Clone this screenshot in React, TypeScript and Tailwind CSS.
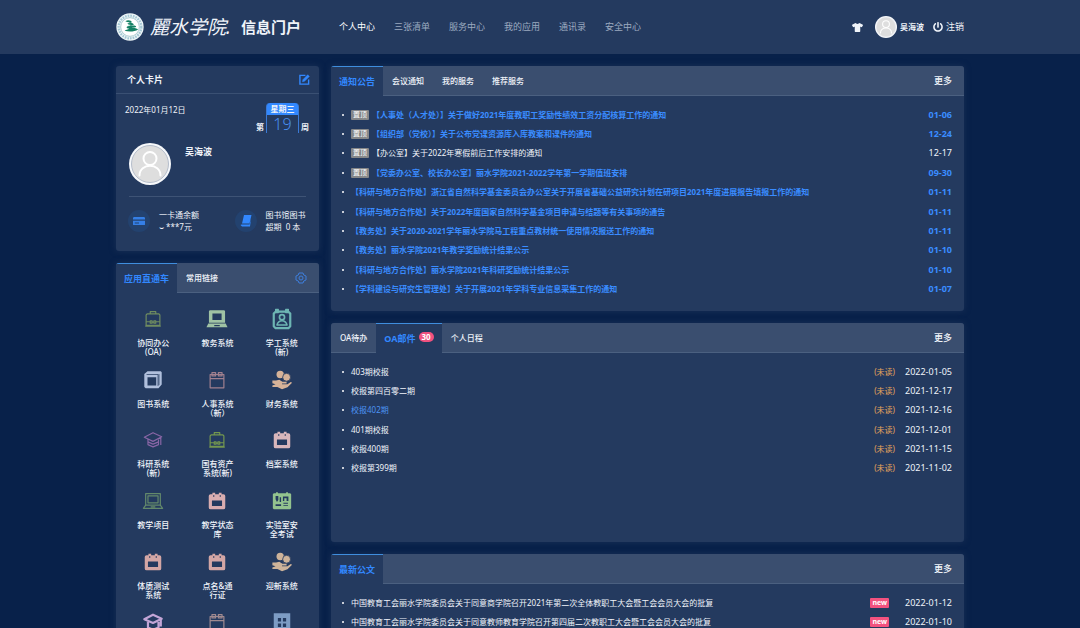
import React from "react";
import { FaTshirt, FaPowerOff } from "react-icons/fa";

type IconProps = { className?: string };

function Svg({ className, children }: { className?: string; children: React.ReactNode }) {
  return (
    <svg viewBox="0 0 24 24" aria-hidden="true" fill="none" stroke="currentColor" strokeWidth="1.3" strokeLinejoin="round" className={`size-[22px] ${className ?? ""}`}>
      {children}
    </svg>
  );
}

function Briefcase({ className }: IconProps) {
  return (
    <Svg className={className}>
      <path d="M9 6.500V4h6v2.500M5.500 6.500h13l1 1V19h-15V7.500zM4.500 15H9m6 0h4.500M9 14h2v2.500H9zM13 14h2v2.500h-2zM11 15.500h2M3.500 19.700h17" />
    </Svg>
  );
}

function LaptopSolid({ className }: IconProps) {
  return (
    <Svg className={className}>
      <g fill="currentColor" stroke="none" fillRule="evenodd">
        <path d="M4 2.500h16l.8 1V16H3.200V3.500zM7 6v7h10V6z" />
        <path d="M2.500 17h19l2 4H.5zM9 18.500v1.300h6v-1.300z" />
      </g>
    </Svg>
  );
}

function LaptopLine({ className }: IconProps) {
  return (
    <Svg className={className}>
      <path d="M4 4h16v12.500H4zM6.500 6.500h11V14h-11zM4 16.500L1.500 20h21L20 16.500M9.500 18.500h5" />
    </Svg>
  );
}

function Badge({ className }: IconProps) {
  return (
    <Svg className={className}>
      <path strokeWidth="2.400" d="M5 4h14l2 2v14l-2 2H5l-2-2V6z" />
      <path fill="currentColor" d="M5 1.500h3V5H5zM16 1.500h3V5h-3z" />
      <circle cx="12" cy="10" r="2.800" strokeWidth="1.800" />
      <path strokeWidth="1.700" d="M6.500 18.500c1-3.500 3-4.500 5.500-4.500s4.500 1 5.500 4.500z" />
    </Svg>
  );
}

function Books({ className }: IconProps) {
  return (
    <Svg className={className}>
      <g fill="currentColor" stroke="none" fillRule="evenodd">
        <path d="M6 2.500h14.500l1 1V17L18 21H4l-1.500-1.500v-14zM6 9v9h9.500V9z" />
      </g>
      <path stroke="#243a5f" strokeWidth="0.800" d="M5 6h12.500v12.500M18.500 5.500v12" />
    </Svg>
  );
}

function CalendarLine({ className }: IconProps) {
  return (
    <Svg className={className}>
      <path d="M4.500 6h15v14.500h-15zM4.500 10.500h15M6.500 4h4v3.500h-4zM13.500 4h4v3.500h-4z" />
    </Svg>
  );
}

function CalendarSolid({ className }: IconProps) {
  return (
    <Svg className={className}>
      <path
        fill="currentColor"
        stroke="none"
        fillRule="evenodd"
        d="M5 4.500h2V3h3v1.500h4V3h3v1.500h2a2 2 0 0 1 2 2V19a2 2 0 0 1-2 2H5a2 2 0 0 1-2-2V6.500a2 2 0 0 1 2-2zM6.500 11.500v6h11v-6zM8 5.500v2h1v-2zM15 5.500v2h1v-2z"
      />
    </Svg>
  );
}

function HandCoins({ className }: IconProps) {
  return (
    <Svg className={className}>
      <circle cx="10" cy="6" r="4" fill="currentColor" stroke="none" />
      <circle cx="17" cy="9" r="4.300" fill="currentColor" stroke="#243a5f" strokeWidth="0.900" />
      <path fill="currentColor" stroke="none" d="M1.500 12.500h4l3.500-.8 3.500 2.300H17v1.800h-5v.8h6l3.500-2.500 1.500.9-5 5-6 2-5-2.500h-5.500v-1.500L5 16.500l-3.500-1z" />
    </Svg>
  );
}

function GradLine({ className }: IconProps) {
  return (
    <Svg className={className}>
      <path d="M2.500 9L12 4l9.500 4.500L12 13.500zM6.500 11.500v5.500l5.500 2.500 6-2.500v-5.500M6.500 14l5.500 2.500 6-2.500M20.500 9v8.500" />
    </Svg>
  );
}

function GradSolid({ className }: IconProps) {
  return (
    <Svg className={className}>
      <path strokeWidth="2.400" d="M2.500 9L12 4l9.500 4.500L12 13zM6.500 12v6l5.500 2.500 6-2.500v-6M20.500 9v8" />
    </Svg>
  );
}

function LabCard({ className }: IconProps) {
  return (
    <Svg className={className}>
      <path
        fill="currentColor"
        stroke="none"
        fillRule="evenodd"
        d="M3 3.500h2.500V2.500h2v1h9v-1h2v1H21l1 1V20l-1 1H3l-1-1V4.500zM5 6.500V10l1.500 3L8 11V6.500zM9.500 8v5h1.500V8zM13 7v5h1.500V9H17v3h2V7zM5 15.500v2h6v-2zM13.500 14v1h5v-1zM13.500 16.500v1h5v-1z"
      />
    </Svg>
  );
}

function Building({ className }: IconProps) {
  return (
    <Svg className={className}>
      <path fill="currentColor" stroke="none" fillRule="evenodd" d="M3 2.500h18V22H3zM7.500 7.500v4h3.500v-4zM13 7.500v4h3.500v-4zM7.500 13.500v4h3.500v-4zM13 13.500v4h3.500v-4z" />
    </Svg>
  );
}

function SchoolSeal() {
  return (
    <svg viewBox="0 0 84 84" role="img" aria-label="校徽" className="size-[28px] shrink-0">
      <circle cx="42" cy="42" r="41" fill="#eef6f8" />
      <circle cx="42" cy="42" r="34" fill="none" stroke="#a5c8d5" strokeWidth="7" strokeDasharray="5 3" />
      <circle cx="42" cy="42" r="28" fill="#ffffff" stroke="#8ab5bd" strokeWidth="2" />
      <path fill="#148064" d="M28 25c8-6 19-2 19 2s-8 2-13 5c6-3 18-2 19 2s-10 2-17 6c8-2 22-4 24 0s-7 4-13 5c8-1 18 1 19 5-10 6-28 7-40 3 4-3 9-4 14-6-5 0-9-2-8-5s9-5 12-7c-5 0-9-1-8-3s6-4 8-5c-4 1-10 1-16-2z" />
    </svg>
  );
}

function Avatar({ small = false }: { small?: boolean }) {
  return (
    <svg viewBox="0 0 42 42" role="img" aria-label="头像" className={small ? "size-[22px] shrink-0" : "size-[42px] shrink-0"}>
      <circle cx="21" cy="21" r="21" fill="#f6f8fb" />
      <circle cx="21" cy="21" r="18.500" fill="#dedede" stroke={small ? "#e6e8ec" : "#a7b1c2"} strokeWidth="0.8" />
      <g fill="none" stroke="#ffffff" strokeWidth="2" strokeLinecap="round">
        <circle cx="21" cy="15.500" r="6.500" />
        <path d="M10.500 32.500c0-13 21-13 21 0" />
      </g>
    </svg>
  );
}

type AppEntry = { name: string[]; icon: (p: IconProps) => React.JSX.Element; color: string };

const apps: AppEntry[] = [
  { name: ["协同办公", "(OA)"], icon: Briefcase, color: "text-[#6f8c60]" },
  { name: ["教务系统"], icon: LaptopSolid, color: "text-[#9fc2a4]" },
  { name: ["学工系统", "(新)"], icon: Badge, color: "text-[#6db5b3]" },
  { name: ["图书系统"], icon: Books, color: "text-[#b0bfdc]" },
  { name: ["人事系统", "（新）"], icon: CalendarLine, color: "text-[#a0808f]" },
  { name: ["财务系统"], icon: HandCoins, color: "text-[#d6b298]" },
  { name: ["科研系统", "(新)"], icon: GradLine, color: "text-[#8865a5]" },
  { name: ["国有资产", "系统(新)"], icon: Briefcase, color: "text-[#73974f]" },
  { name: ["档案系统"], icon: CalendarSolid, color: "text-[#d8b6bb]" },
  { name: ["教学项目"], icon: LaptopLine, color: "text-[#63896b]" },
  { name: ["教学状态", "库"], icon: CalendarSolid, color: "text-[#d9adb0]" },
  { name: ["实验室安", "全考试"], icon: LabCard, color: "text-[#93c38e]" },
  { name: ["体质测试", "系统"], icon: CalendarSolid, color: "text-[#d3a6a5]" },
  { name: ["点名&通", "行证"], icon: CalendarSolid, color: "text-[#d3a6a5]" },
  { name: ["迎新系统"], icon: HandCoins, color: "text-[#cdb39a]" },
  { name: [], icon: GradSolid, color: "text-[#c3a5d6]" },
  { name: [], icon: CalendarLine, color: "text-[#a08a90]" },
  { name: [], icon: Building, color: "text-[#7d9cc4]" },
];

const notices = [
  { top: true, text: "【人事处（人才处）】关于做好2021年度教职工奖励性绩效工资分配核算工作的通知", date: "01-06" },
  { top: true, text: "【组织部（党校）】关于公布党课资源库入库教案和课件的通知", date: "12-24" },
  { top: true, plain: true, text: "【办公室】关于2022年寒假前后工作安排的通知", date: "12-17" },
  { top: true, text: "【党委办公室、校长办公室】丽水学院2021-2022学年第一学期值班安排", date: "09-30" },
  { text: "【科研与地方合作处】浙江省自然科学基金委员会办公室关于开展省基础公益研究计划在研项目2021年度进展报告填报工作的通知", date: "01-11" },
  { text: "【科研与地方合作处】关于2022年度国家自然科学基金项目申请与结题等有关事项的通告", date: "01-11" },
  { text: "【教务处】关于2020-2021学年丽水学院马工程重点教材统一使用情况报送工作的通知", date: "01-11" },
  { text: "【教务处】丽水学院2021年教学奖励统计结果公示", date: "01-10" },
  { text: "【科研与地方合作处】丽水学院2021年科研奖励统计结果公示", date: "01-10" },
  { text: "【学科建设与研究生管理处】关于开展2021年学科专业信息采集工作的通知", date: "01-07" },
];

const mails = [
  { text: "403期校报", date: "2022-01-05" },
  { text: "校报第四百零二期", date: "2021-12-17" },
  { text: "校报402期", date: "2021-12-16", active: true },
  { text: "401期校报", date: "2021-12-01" },
  { text: "校报400期", date: "2021-11-15" },
  { text: "校报第399期", date: "2021-11-02" },
];

const documents = [
  { text: "中国教育工会丽水学院委员会关于同意商学院召开2021年第二次全体教职工大会暨工会会员大会的批复", date: "2022-01-12" },
  { text: "中国教育工会丽水学院委员会关于同意教师教育学院召开第四届二次教职工大会暨工会会员大会的批复", date: "2022-01-10" },
];

function Panel({ children, className = "" }: { children: React.ReactNode; className?: string }) {
  return <section className={`overflow-hidden rounded-[3px] bg-[#243a5f] shadow-[0_0_6px_#1a3157] ${className}`}>{children}</section>;
}

function TabBar({ children }: { children: React.ReactNode }) {
  return (
    <div className="flex h-[30px] bg-[#3a4e6f]">
      {children}
      <div className="flex flex-1 items-center justify-end border-b border-[#4b6080] pr-3">
        <a href="#" className="text-[9px] font-medium">更多</a>
      </div>
    </div>
  );
}

function Tab({ children, active = false }: { children: React.ReactNode; active?: boolean }) {
  return (
    <button
      type="button"
      className={
        active
          ? "flex items-center border-t border-[#3f8ede] bg-[#243a5f] px-2 pt-px text-[9px] font-bold text-[#3288ff]"
          : "flex items-center border-b border-[#4b6080] px-[9px] text-[8px] font-medium"
      }
    >
      {children}
    </button>
  );
}

function Row({ children, date, blue = false }: { children: React.ReactNode; date: string; blue?: boolean }) {
  return (
    <li className={`flex items-center ${blue ? "font-bold text-[#3a8cff]" : ""}`}>
      <span className="mr-[7px] size-[2px] shrink-0 rounded-full bg-white" />
      {children}
      <time className="ml-[10px] shrink-0 text-[9px]">{date}</time>
    </li>
  );
}

export default function App() {
  return (
    <div className="min-h-screen bg-[#08214a] font-['Noto_Sans','Noto_Sans_CJK_SC',sans-serif] text-[8px] leading-[12px] text-[#f0f4fa]">
      <header className="bg-[#243a5f]">
        <div className="mx-auto flex h-[54px] max-w-[848px] items-center">
          <SchoolSeal />
          <a href="#" className="ml-[6px] flex items-center gap-[10px] whitespace-nowrap">
            <span className="text-[19px] leading-[28px] italic">麗水学院.</span>
            <span className="text-[15px] leading-[24px] font-bold">信息门户</span>
          </a>
          <nav className="ml-[38px] flex gap-[19px] text-[9px] whitespace-nowrap text-[#9caac0]">
            <a href="#" className="text-white">个人中心</a>
            <a href="#">三张清单</a>
            <a href="#">服务中心</a>
            <a href="#">我的应用</a>
            <a href="#">通讯录</a>
            <a href="#">安全中心</a>
          </nav>
          <div className="ml-auto flex items-center text-[9px]">
            <button type="button" aria-label="换肤" className="mr-3"><FaTshirt className="size-[11px]" /></button>
            <Avatar small />
            <span className="ml-[3px] text-[8px] font-bold">吴海波</span>
            <button type="button" className="ml-[9px] flex items-center gap-[3px]">
              <FaPowerOff className="size-[10px]" />注销
            </button>
          </div>
        </div>
      </header>

      <main className="mx-auto grid max-w-[848px] grid-cols-[203px_minmax(0,1fr)] items-start gap-3 pt-3">
        <div className="grid gap-3">
          <Panel className="h-[185px]">
            <div className="flex h-[28px] items-center justify-between border-b border-[#3a5073] pr-[9px] pl-[11px]">
              <h2 className="text-[9px] font-bold">个人卡片</h2>
              <button type="button" aria-label="编辑" className="text-[#3288ff]">
                <svg viewBox="0 0 12 12" className="size-[11px]" fill="none" stroke="currentColor" strokeWidth="1.500">
                  <path d="M7 1.500H1V11h9.500V6" />
                  <path fill="currentColor" strokeWidth="0.500" d="M3.800 8.500l.4-2.300L9.500.8l1.800 1.800L6 8z" />
                </svg>
              </button>
            </div>
            <div className="flex h-[46px] justify-between pr-[10px] pl-[9px]">
              <time className="pt-[10px]">2022年01月12日</time>
              <div className="flex items-end gap-[2px] pb-[7px] font-bold">
                第
                <div className="h-[30px] w-[33px] rounded-t-[4px] border-x border-[#3a79d5] text-center font-normal">
                  <div className="rounded-t-[3px] bg-[#3288ff] text-[8px] font-bold">星期三</div>
                  <div className="text-[16px] leading-[18px] font-light text-[#488eef]">19</div>
                </div>
                周
              </div>
            </div>
            <div className="mx-[13px] flex h-[57px] gap-[14px] border-b border-[#3e5375] pt-[3px]">
              <Avatar />
              <span className="pt-[3px] text-[9px] font-bold">吴海波</span>
            </div>
            <div className="grid grid-cols-2 pt-3 pl-3">
              <div className="flex items-center gap-[9px]">
                <span className="flex size-[22px] items-center justify-center rounded-full bg-[#23426f] text-[#357fe6]">
                  <svg viewBox="0 0 14 10" className="w-[12px]" fill="currentColor"><path fillRule="evenodd" d="M1 0h12l1 1v8l-1 1H1L0 9V1zM0 3v1.300h14V3zM2 6.500v1h5v-1z" /></svg>
                </span>
                <p>一卡通余额<br />⌣ ***7元</p>
              </div>
              <div className="flex items-center gap-[9px] pl-[11px]">
                <span className="flex size-[22px] items-center justify-center rounded-full bg-[#23426f] text-[#3288ff]">
                  <svg viewBox="0 0 12 12" className="w-[12px]" fill="currentColor"><path d="M4 0h7.500L9.500 8.500H2zM1.500 9.500h8L11 4l-1 7.500H2L.5 10z" /></svg>
                </span>
                <p className="whitespace-pre">图书馆图书<br />超期  0 本</p>
              </div>
            </div>
          </Panel>

          <Panel>
            <div className="flex h-[30px] bg-[#3a4e6f]">
              <Tab active>应用直通车</Tab>
              <Tab>常用链接</Tab>
              <div className="flex flex-1 items-center justify-end border-b border-[#4b6080] pr-3">
                <button type="button" aria-label="设置" className="text-[#3e7edc]">
                  <svg viewBox="0 0 24 24" className="size-[12px]" fill="none" stroke="currentColor" strokeWidth="2">
                    <path d="M8 2h8l1.500 4L22 8v8l-4.500 2L16 22H8l-1.500-4L2 16V8l4.500-2z" />
                    <circle cx="12" cy="12" r="4" />
                  </svg>
                </button>
              </div>
            </div>
            <div className="grid h-[376px] auto-rows-fr grid-cols-3 px-[5px] pt-3">
              {apps.map(({ name, icon: Icon, color }, index) => (
                <a key={index} href="#" className="flex flex-col items-center pt-[3px] text-center leading-[9px] font-medium">
                  <Icon className={color} />
                  {name.length > 0 && (
                    <span className="pt-[8px]">
                      {name.map((line) => <span key={line} className="block">{line}</span>)}
                    </span>
                  )}
                </a>
              ))}
            </div>
          </Panel>
        </div>

        <div className="grid gap-3">
          <Panel className="h-[245px]">
            <TabBar>
              <Tab active>通知公告</Tab>
              <Tab>会议通知</Tab>
              <Tab>我的服务</Tab>
              <Tab>推荐服务</Tab>
            </TabBar>
            <ul className="mt-[9px] grid h-[194px] auto-rows-fr pr-3 pl-[11px]">
              {notices.map((n) => (
                <Row key={n.text} date={n.date} blue={!n.plain}>
                  {n.top && <span className="mr-[3px] rounded-[1px] bg-[#858789] px-[2px] text-[7px] leading-[10px] font-normal text-white">置顶</span>}
                  <a href="#" className="min-w-0 flex-1 truncate">{n.text}</a>
                </Row>
              ))}
            </ul>
          </Panel>

          <Panel className="h-[219px]">
            <TabBar>
              <Tab>OA待办</Tab>
              <Tab active>
                OA邮件
                <span className="mb-[5px] ml-[3px] rounded-full bg-[#f0517f] px-[3px] text-[8px] leading-[10px] font-bold text-white">30</span>
              </Tab>
              <Tab>个人日程</Tab>
            </TabBar>
            <ul className="mt-[9px] grid h-[116px] auto-rows-fr pr-3 pl-[11px]">
              {mails.map((m) => (
                <Row key={m.text} date={m.date}>
                  <a href="#" className={`flex-1 ${m.active ? "text-[#4c93f2]" : ""}`}>{m.text}</a>
                  <span className="text-[#e5a45b]">(未读)</span>
                </Row>
              ))}
            </ul>
          </Panel>

          <Panel>
            <TabBar>
              <Tab active>最新公文</Tab>
            </TabBar>
            <ul className="mt-[9px] grid h-[39px] auto-rows-fr pr-3 pl-[11px]">
              {documents.map((d) => (
                <Row key={d.text} date={d.date}>
                  <a href="#" className="min-w-0 flex-1 truncate">{d.text}</a>
                  <span className="mr-[6px] rounded-[1px] bg-[#f3527f] px-[2px] text-[7px] leading-[10px] font-bold text-white">new</span>
                </Row>
              ))}
            </ul>
          </Panel>
        </div>
      </main>
    </div>
  );
}
